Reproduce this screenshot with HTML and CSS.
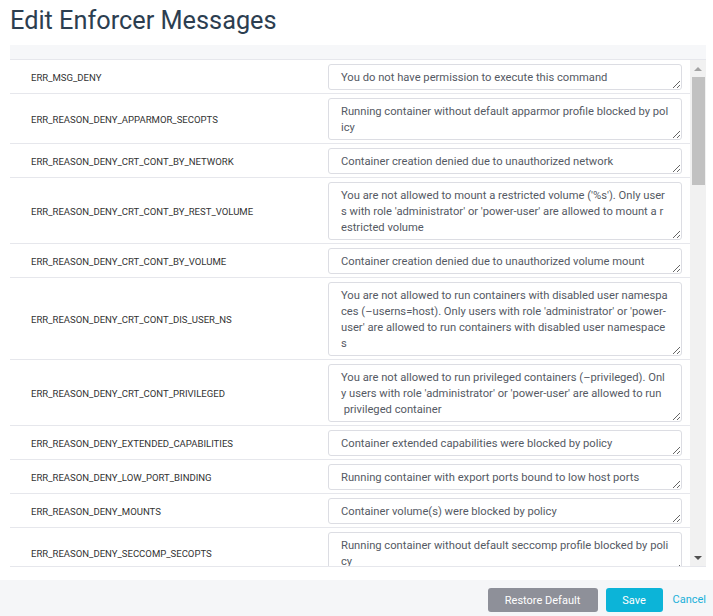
FILE: index.html
```html
<!DOCTYPE html>
<html>
<head>
<meta charset="utf-8">
<link rel="stylesheet" href="styles.css">
</head>
<body>
<h1 class="title">Edit Enforcer Messages</h1>
<div class="panel">
  <div class="panel-head"></div>
  <div class="panel-body">
    <div class="rows">
      <div class="row"><span class="key">ERR_MSG_DENY</span><textarea class="msg" rows="1">You do not have permission to execute this command</textarea></div>
      <div class="row"><span class="key">ERR_REASON_DENY_APPARMOR_SECOPTS</span><textarea class="msg" rows="2">Running container without default apparmor profile blocked by policy</textarea></div>
      <div class="row"><span class="key">ERR_REASON_DENY_CRT_CONT_BY_NETWORK</span><textarea class="msg" rows="1">Container creation denied due to unauthorized network</textarea></div>
      <div class="row"><span class="key">ERR_REASON_DENY_CRT_CONT_BY_REST_VOLUME</span><textarea class="msg" rows="3">You are not allowed to mount a restricted volume ('%s'). Only users with role 'administrator' or 'power-user' are allowed to mount a restricted volume</textarea></div>
      <div class="row"><span class="key">ERR_REASON_DENY_CRT_CONT_BY_VOLUME</span><textarea class="msg" rows="1">Container creation denied due to unauthorized volume mount</textarea></div>
      <div class="row"><span class="key">ERR_REASON_DENY_CRT_CONT_DIS_USER_NS</span><textarea class="msg" rows="4">You are not allowed to run containers with disabled user namespaces (–userns=host). Only users with role 'administrator' or 'power-user' are allowed to run containers with disabled user namespaces</textarea></div>
      <div class="row"><span class="key">ERR_REASON_DENY_CRT_CONT_PRIVILEGED</span><textarea class="msg" rows="3">You are not allowed to run privileged containers (–privileged). Only users with role 'administrator' or 'power-user' are allowed to run &#160;privileged container</textarea></div>
      <div class="row"><span class="key">ERR_REASON_DENY_EXTENDED_CAPABILITIES</span><textarea class="msg" rows="1">Container extended capabilities were blocked by policy</textarea></div>
      <div class="row"><span class="key">ERR_REASON_DENY_LOW_PORT_BINDING</span><textarea class="msg" rows="1">Running container with export ports bound to low host ports</textarea></div>
      <div class="row"><span class="key">ERR_REASON_DENY_MOUNTS</span><textarea class="msg" rows="1">Container volume(s) were blocked by policy</textarea></div>
      <div class="row"><span class="key">ERR_REASON_DENY_SECCOMP_SECOPTS</span><textarea class="msg" rows="2">Running container without default seccomp profile blocked by policy</textarea></div>
    </div>
    <div class="scrollbar">
      <div class="arrow up"></div>
      <div class="track"><div class="thumb"></div></div>
      <div class="arrow down"></div>
    </div>
  </div>
</div>
<div class="footer">
  <button class="btn btn-grey">Restore Default</button>
  <button class="btn btn-primary">Save</button>
  <a class="link" href="#">Cancel</a>
</div>
</body>
</html>
```
FILE: styles.css
```css
* { box-sizing: border-box; }
html, body { margin: 0; padding: 0; background: #fff; }
body {
  font-family: Roboto, "Liberation Sans", sans-serif;
  width: 713px;
  height: 616px;
  overflow: hidden;
}
.title {
  margin: 7px 10px 10px;
  font-size: 25.3px;
  line-height: 28px;
  font-weight: 400;
  color: #2c3e50;
}
.panel {
  margin: 0 7px 0 10px;
  border-bottom: 1px solid #e6e7ec;
}
.panel-head {
  height: 15px;
  background: #f6f7f9;
  border-bottom: 1px solid #e6e7ec;
}
.panel-body {
  display: flex;
  height: 506px;
}
.rows {
  flex: 1;
  overflow: hidden;
}
.row {
  display: grid;
  grid-template-columns: 297px 354px;
  align-items: center;
  padding: 4px 8px 3px 21px;
  border-bottom: 1px solid #e6e7ec;
}
.key {
  font-size: 9.55px;
  color: #333;
}
.msg {
  display: block;
  margin: 0;
  padding: 5px 12px 3px;
  border: 1px solid #dcdde3;
  border-radius: 3px;
  font-family: Roboto, "Liberation Sans", sans-serif;
  font-size: 11.2px;
  line-height: 16px;
  color: #555a64;
  word-break: break-all;
  box-sizing: content-box;
  width: 328px;
  overflow: hidden;
  background: #fff;
  resize: vertical;
}
.scrollbar {
  width: 16px;
  background: #f1f1f1;
  display: flex;
  flex-direction: column;
}
.arrow {
  height: 17px;
  display: flex;
  align-items: center;
  justify-content: center;
}
.arrow::before {
  content: "";
  width: 0;
  height: 0;
  border-left: 4px solid transparent;
  border-right: 4px solid transparent;
}
.arrow.up::before { border-bottom: 4px solid #a3a3a3; }
.arrow.down::before { border-top: 4px solid #505050; }
.track {
  flex: 1;
  padding: 0 1px 0 2px;
}
.thumb {
  height: 108px;
  background: #c1c1c1;
}
.footer {
  margin-top: 13px;
  height: 36px;
  background: #f5f6f8;
  display: flex;
  justify-content: flex-end;
  align-items: flex-start;
  padding: 8px 7px 0 0;
}
.btn {
  height: 24px;
  border: none;
  border-radius: 3px;
  color: #fff;
  font-family: Roboto, "Liberation Sans", sans-serif;
  font-size: 11px;
  padding: 0;
}
.btn-grey {
  width: 110px;
  background: #8e9099;
  margin-right: 8px;
}
.btn-primary {
  width: 57px;
  background: #0cb4d8;
  margin-right: 10px;
}
.link {
  font-size: 11px;
  line-height: 24px;
  color: #1ab0d8;
  text-decoration: none;
}
```
